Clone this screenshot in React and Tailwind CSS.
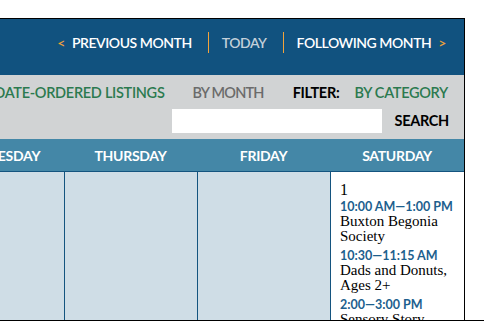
import React from 'react';

const sans = { fontFamily: 'Lato, "Open Sans", sans-serif' };
const serif = { fontFamily: '"Liberation Serif", serif' };

const days = ['WEDNESDAY', 'THURSDAY', 'FRIDAY', 'SATURDAY'];

const events = [
  { time: '10:00 AM—1:00 PM', title: ['Buxton Begonia', 'Society'] },
  { time: '10:30—11:15 AM', title: ['Dads and Donuts,', 'Ages 2+'] },
  { time: '2:00—3:00 PM', title: ['Sensory Story-', 'time'] },
];

export default function App() {
  return (
    <div className="w-[484px] h-[321px] bg-white border-b border-black overflow-hidden">
      <div className="mt-[18px] w-[465px] h-[302px] border-t border-r border-black overflow-hidden flex flex-col">
        {/* Month navigation */}
        <div
          className="h-[56px] shrink-0 bg-[#11527f] flex items-center justify-end pr-[18px] pb-[9px] text-[14px] tracking-[-0.45px] font-semibold"
          style={sans}
        >
          <span className="text-[#f2a33a] mr-[7px]">&lt;</span>
          <span className="text-white">PREVIOUS MONTH</span>
          <span className="w-px h-[21px] bg-[#f2a33a] ml-[16px] mr-[13px]" />
          <span className="text-[#c3d0da]">TODAY</span>
          <span className="w-px h-[21px] bg-[#f2a33a] ml-[16px] mr-[13px]" />
          <span className="text-white">FOLLOWING MONTH</span>
          <span className="text-[#f2a33a] ml-[7px]">&gt;</span>
        </div>

        {/* Listing / filter bar */}
        <div
          className="h-[64px] shrink-0 bg-[#d1d3d4] flex flex-col pr-[16px] text-[14.5px] tracking-[-0.3px] font-semibold"
          style={sans}
        >
          <div className="h-[34px] flex items-center justify-end whitespace-nowrap pt-[1px]">
            <span className="text-[#2b7a4f]">DATE-ORDERED LISTINGS</span>
            <span className="w-px h-[20px] bg-white ml-[15px] mr-[13px]" />
            <span className="text-[#6b6b6b] tracking-[-0.8px]">BY MONTH</span>
            <span className="text-black font-bold ml-[29px]">FILTER:</span>
            <span className="text-[#2b7a4f] ml-[15px]">BY CATEGORY</span>
          </div>
          <div className="flex items-center justify-end -mr-px">
            <div className="w-[210px] h-[24px] bg-white" />
            <span className="text-black font-bold ml-[12px]">SEARCH</span>
          </div>
        </div>

        {/* Day headings */}
        <div
          className="h-[33px] shrink-0 bg-[#4487a7] border-b border-[#14547f] flex justify-end text-[14px] tracking-[-0.3px] font-bold text-white"
          style={sans}
        >
          {days.map((d, i) => (
            <div
              key={d}
              className={`${i === 3 ? 'w-[134px]' : 'w-[133px]'} shrink-0 flex items-center justify-center`}
            >
              {d}
            </div>
          ))}
        </div>

        {/* Week row */}
        <div className="flex-1 flex justify-end">
          <div className="w-[133px] shrink-0 bg-[#cfdde6]" />
          <div className="w-[133px] shrink-0 bg-[#cfdde6] border-l border-[#14547f]" />
          <div className="w-[133px] shrink-0 bg-[#cfdde6] border-l border-[#14547f]" />
          <div className="w-[134px] shrink-0 bg-white border-l border-[#14547f] pl-[9px] pt-[9px]">
            <div className="text-[16px] leading-[17px] text-black" style={serif}>
              1
            </div>
            {events.map((e, i) => (
              <div key={e.time} className={i === 0 ? 'mt-[1px]' : 'mt-[4px]'}>
                <div className="text-[12.5px] leading-[15px] font-bold text-[#1d5f8e]" style={sans}>
                  {e.time}
                </div>
                {e.title.map((t) => (
                  <div key={t} className="text-[15px] leading-[15px] text-black" style={serif}>
                    {t}
                  </div>
                ))}
              </div>
            ))}
          </div>
        </div>
      </div>
    </div>
  );
}
